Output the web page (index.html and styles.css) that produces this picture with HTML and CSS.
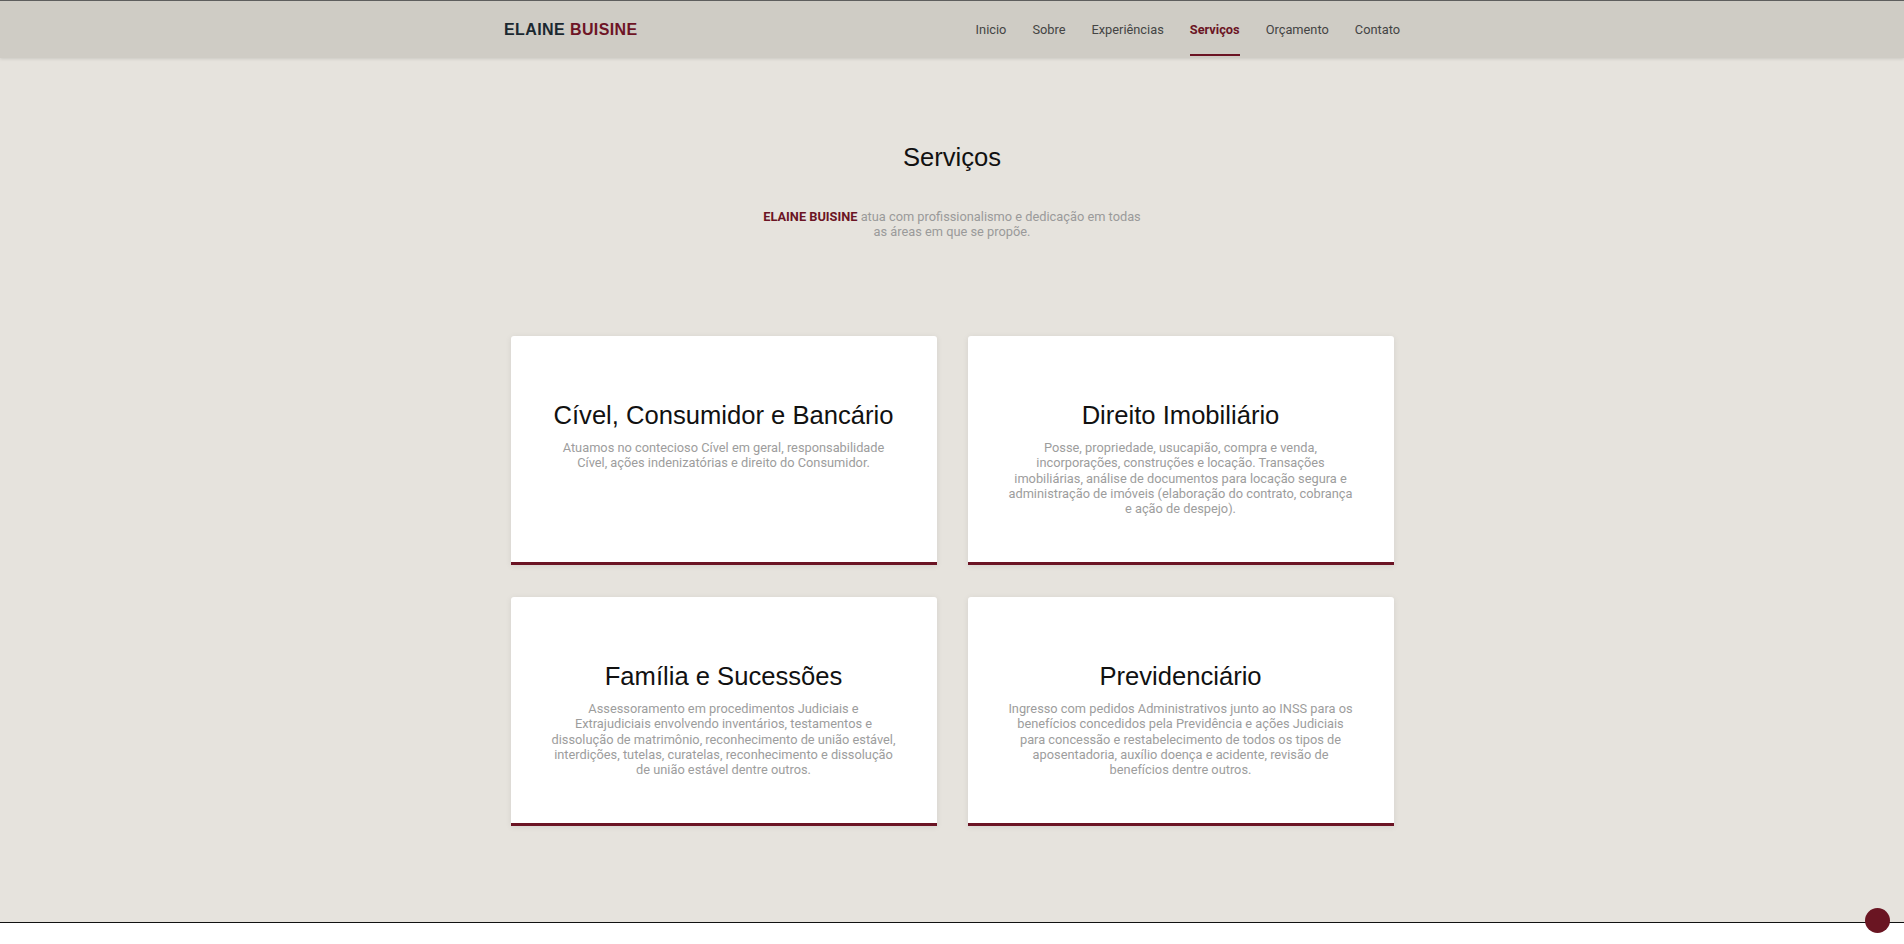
FILE: index.html
```html
<!DOCTYPE html>
<html lang="pt-BR">
<head>
<meta charset="utf-8">
<title>Elaine Buisine - Serviços</title>
<link rel="stylesheet" href="styles.css">
</head>
<body>
<header class="topbar">
  <div class="topbar-inner">
    <a class="logo" href="#"><span class="logo-dark">ELAINE</span> <span class="logo-red">BUISINE</span></a>
    <nav class="menu">
      <a class="menu-link" href="#">Inicio</a>
      <a class="menu-link" href="#">Sobre</a>
      <a class="menu-link" href="#">Experiências</a>
      <a class="menu-link active" href="#">Serviços</a>
      <a class="menu-link" href="#">Orçamento</a>
      <a class="menu-link" href="#">Contato</a>
    </nav>
  </div>
</header>

<main class="services">
  <h2 class="section-title">Serviços</h2>
  <p class="section-lead"><strong>ELAINE BUISINE</strong> atua com profissionalismo e dedicação em todas as áreas em que se propõe.</p>

  <div class="cards">
    <article class="card">
      <h3 class="card-title">Cível, Consumidor e Bancário</h3>
      <p class="card-text">Atuamos no contecioso Cível em geral, responsabilidade Cível, ações indenizatórias e direito do Consumidor.</p>
    </article>
    <article class="card">
      <h3 class="card-title">Direito Imobiliário</h3>
      <p class="card-text">Posse, propriedade, usucapião, compra e venda, incorporações, construções e locação. Transações imobiliárias, análise de documentos para locação segura e administração de imóveis (elaboração do contrato, cobrança e ação de despejo).</p>
    </article>
    <article class="card">
      <h3 class="card-title">Família e Sucessões</h3>
      <p class="card-text">Assessoramento em procedimentos Judiciais e Extrajudiciais envolvendo inventários, testamentos e dissolução de matrimônio, reconhecimento de união estável, interdições, tutelas, curatelas, reconhecimento e dissolução de união estável dentre outros.</p>
    </article>
    <article class="card">
      <h3 class="card-title">Previdenciário</h3>
      <p class="card-text">Ingresso com pedidos Administrativos junto ao INSS para os benefícios concedidos pela Previdência e ações Judiciais para concessão e restabelecimento de todos os tipos de aposentadoria, auxílio doença e acidente, revisão de benefícios dentre outros.</p>
    </article>
  </div>
</main>

<footer class="next-section"></footer>

<a class="to-top" href="#" aria-label="Voltar ao topo"></a>
</body>
</html>
```

FILE: styles.css
```css
* {
  box-sizing: border-box;
}

html, body {
  margin: 0;
  padding: 0;
}

body {
  background: #e6e3dd;
  font-family: Roboto, "Liberation Sans", Arial, sans-serif;
  color: #444;
}

a {
  text-decoration: none;
}

.topbar {
  border-top: 1px solid #5e5e5e;
  background: #cfccc5;
  height: 58px;
  box-shadow: 0 1px 3px rgba(0, 0, 0, 0.12);
  position: relative;
  z-index: 2;
}

.topbar-inner {
  width: 896px;
  height: 57px;
  margin: 0 auto;
  display: flex;
  justify-content: space-between;
  align-items: center;
}

.logo {
  font-family: "Liberation Sans", Arial, sans-serif;
  font-weight: bold;
  font-size: 16px;
  letter-spacing: 0.4px;
}

.logo-dark {
  color: #1b2830;
}

.logo-red {
  color: #6e1426;
}

.menu {
  display: flex;
  height: 57px;
  margin-right: -13px;
}

.menu-link {
  position: relative;
  display: flex;
  align-items: center;
  padding: 0 13px;
  font-size: 12.8px;
  color: #444;
}

.menu-link.active {
  color: #6b1424;
  font-weight: bold;
}

.menu-link.active::after {
  content: "";
  position: absolute;
  left: 13px;
  right: 13px;
  bottom: 2px;
  height: 2px;
  background: #6b1424;
}

.services {
  padding: 84px 0 96px;
  text-align: center;
}

.section-title {
  margin: 0;
  font-family: "Liberation Sans", Arial, sans-serif;
  font-weight: normal;
  font-size: 25.6px;
  line-height: 30px;
  color: #111;
}

.section-lead {
  margin: 37px auto 0;
  max-width: 390px;
  font-size: 12.8px;
  line-height: 15px;
  color: #9a9a9a;
}

.section-lead strong {
  color: #6b1424;
  font-weight: 700;
}

.cards {
  width: 883px;
  margin: 97px auto 0;
  display: grid;
  grid-template-columns: 426px 426px;
  column-gap: 31px;
  row-gap: 32px;
}

.card {
  height: 229px;
  background: #fff;
  border-radius: 3px 3px 0 0;
  border-bottom: 3px solid #6b1424;
  box-shadow: 0 1px 6px rgba(0, 0, 0, 0.08);
  padding: 64px 40px 0;
}

.card-title {
  margin: 0 0 10px;
  font-family: "Liberation Sans", Arial, sans-serif;
  font-weight: normal;
  font-size: 25.6px;
  line-height: 30px;
  color: #111;
}

.card-text {
  margin: 0;
  font-size: 12.8px;
  line-height: 1.2;
  color: #9d9d9d;
}

.next-section {
  border-top: 1px solid #111;
  background: #fff;
  height: 200px;
}

.to-top {
  position: fixed;
  right: 14px;
  bottom: 11px;
  width: 25px;
  height: 25px;
  border-radius: 50%;
  background: #6a1522;
  z-index: 5;
}
```
